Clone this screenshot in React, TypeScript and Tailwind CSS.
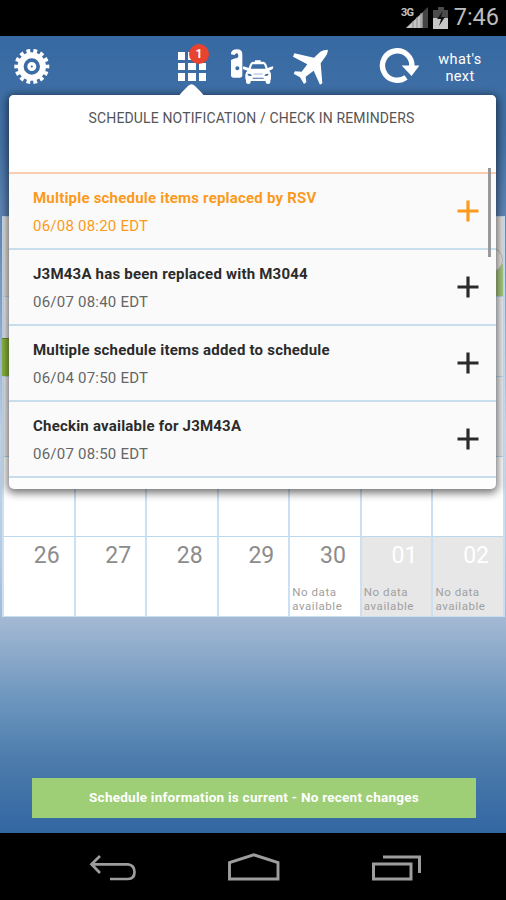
import { clsx } from 'clsx'

interface Reminder {
  title: string
  time: string
  unread?: boolean
}

interface CalendarCell {
  day?: string
  noData?: boolean
  outside?: boolean
}

const reminders: Reminder[] = [
  { title: 'Multiple schedule items replaced by RSV', time: '06/08 08:20 EDT', unread: true },
  { title: 'J3M43A has been replaced with M3044', time: '06/07 08:40 EDT' },
  { title: 'Multiple schedule items added to schedule', time: '06/04 07:50 EDT' },
  { title: 'Checkin available for J3M43A', time: '06/07 08:50 EDT' },
]

const lastWeek: CalendarCell[] = [
  { day: '26' },
  { day: '27' },
  { day: '28' },
  { day: '29' },
  { day: '30', noData: true },
  { day: '01', noData: true, outside: true },
  { day: '02', noData: true, outside: true },
]

const cells: CalendarCell[] = [...Array.from({ length: 28 }, () => ({})), ...lastWeek]

function StatusBar() {
  return (
    <div className="flex h-9 shrink-0 items-center justify-end bg-black pr-[7px]">
      <svg width="50" height="36" viewBox="0 0 50 36">
        <path d="M27 7v21h-22z" fill="#444" />
        <path d="M21.5 12.5V28H5z" fill="#c4c4c4" />
        <path d="M12 21v7M16 17v11M20 13v15" stroke="#8d8d8d" strokeWidth="1" />
        <path d="M37 7h6v3h4v8H32v-8h5z" fill="#4b4b4b" />
        <path d="M32 18h15v11H32z" fill="#c6c6c6" />
        <path d="M42 11l-6 8h4l-2 7 6-9h-4z" fill="#111" />
        <text x="0" y="15.5" fill="#c4c4c4" fontSize="11" fontWeight="700" fontFamily="Roboto" textLength="13">
          3G
        </text>
      </svg>
      <span className="ml-[3px] text-[23.5px] leading-none text-[#bdbdbd]">7:46</span>
    </div>
  )
}

function GearIcon() {
  return (
    <svg width="36" height="40" viewBox="0 0 36 40">
      <circle cx="17.8" cy="20.5" r="11.2" fill="none" stroke="#fff" strokeWidth="6" />
      <circle
        cx="17.8"
        cy="20.5"
        r="15.4"
        fill="none"
        stroke="#fff"
        strokeWidth="4.2"
        pathLength="140"
        strokeDasharray="5.4 4.6"
        strokeDashoffset="2.7"
      />
      <circle cx="17.8" cy="20.5" r="2.8" fill="none" stroke="#fff" strokeWidth="3.4" />
    </svg>
  )
}

function GridIcon() {
  return (
    <div className="relative ml-[126px] h-10 w-9">
      <div className="grid w-[30px] grid-cols-3 gap-x-[3px] gap-y-[3px] pt-1.5 pl-[1.5px]">
        {Array.from({ length: 9 }, (_, i) => (
          <div key={i} className="h-[7.5px] w-[7.5px] bg-white" />
        ))}
      </div>
      <span className="absolute -top-0.5 left-[13px] flex h-5 w-5 items-center justify-center rounded-full bg-[#e8432f] text-[12px] font-bold text-white">
        1
      </span>
    </div>
  )
}

function HotelTaxiIcon() {
  return (
    <svg className="ml-4" width="48" height="40" viewBox="0 0 144 120" fill="#fff">
      {/* door hanger */}
      <path
        fillRule="evenodd"
        d="M9 25V22Q11 10 27 10Q43 10 43 24V87Q43 95 35 95H17Q9 95 9 87V42L21 37Q31 37 31 29Q31 22 26 22Q21 22 20 27ZM28 61a6 6 0 1 0 .1 0Z"
      />
      {/* cab */}
      <path
        fillRule="evenodd"
        d="M81 47V43H98V47H106Q112 48 115 55L119 66L134 61Q138 65 133 70L124 74Q129 80 129 86V98Q129 101 127 102V109Q127 114 120 114Q113 114 113 109V105H68V109Q68 114 61 114Q54 114 54 109V102Q52 100 52 96V86Q53 79 58 74L46 70Q43 65 47 61L62 66L66 55Q69 48 74 47ZM73 55L68 68H113L108 55ZM58 83L61 89L72 90L68 84ZM122 83L119 89L109 90L113 84ZM77 83V85H104V83ZM74 95V98H107V95Z"
      />
    </svg>
  )
}

function PlaneIcon() {
  return (
    <svg className="ml-4" width="38" height="40" viewBox="396 30 114 120" fill="#fff">
      <path d="M503 41Q505 48 497 61L482 82L487 142L480 146L461 104L437 122L439 139L432 144L420 124L401 113L405 106L425 107L442 85L399 62L403 52L462 65L481 47Q490 41 503 41Z" />
    </svg>
  )
}

function RefreshIcon() {
  return (
    <svg className="ml-12" width="42" height="40" viewBox="0 0 42 40">
      <path d="M28 31.300A14.700 14.700 0 1 1 33.800 21" fill="none" stroke="#fff" strokeWidth="5.400" />
      <path d="M23.600 19.500H41.400L33.600 30Z" fill="#fff" />
    </svg>
  )
}

function Calendar() {
  return (
    <div className="mt-[122px] ml-0.5 grid h-[401px] w-[503px] grid-cols-7 grid-rows-5 overflow-hidden border-r-2 border-b border-[#c9def1]">
      {cells.map((cell, i) => (
        <div
          key={i}
          className={clsx(
            'relative border-t border-l-2 border-t-[#bcd8ee] border-l-[#cbe0f3]',
            i < 7 ? 'bg-[#e6e5e3]' : cell.outside ? 'bg-[#e7e7e7]' : i < 21 ? 'bg-[#eeeff3]' : 'bg-white',
          )}
        >
          {i === 6 && (
            <>
              <div className="absolute inset-x-0 bottom-0 h-8 bg-[#a9cc80]" />
              <div className="absolute top-[30px] right-0 h-[26px] w-[26px] rounded-full border border-[#bbb] bg-[#eeede9]" />
            </>
          )}
          {i === 7 && <div className="absolute bottom-0 -left-0.5 h-[38px] w-full border-t border-[#6a8a35] bg-[#8db83f]" />}
          {cell.day && (
            <div
              className={clsx(
                'mt-[5px] pr-[14px] text-right text-[23px] leading-[28px]',
                cell.outside ? 'text-white' : 'text-[#8c8c8c]',
              )}
            >
              {cell.day}
            </div>
          )}
          {cell.noData && (
            <p className="mt-[15px] pl-[2px] text-[11.5px] leading-[14px] tracking-[0.55px] text-[#a0a0a0]">
              No data
              <br />
              available
            </p>
          )}
        </div>
      ))}
    </div>
  )
}

function ReminderPopover() {
  return (
    <div className="absolute top-[59px] left-[9px] h-[394px] w-[487px] rounded-[5px] bg-[#fdfdfd] shadow-[0_2px_9px_2px_rgba(0,0,0,0.55)]">
      <svg className="absolute -top-[11px] left-[169px]" width="27" height="12" viewBox="0 0 27 12">
        <path d="M0 12Q2 11 4 8L10 2Q13.500 -1.500 17 2L23 8Q25 11 27 12Z" fill="#fff" />
      </svg>
      <div className="h-[77px] rounded-t-[5px] bg-white pt-3.5 pr-[2px] text-center text-[14px] leading-[18px] tracking-[0.14px] text-[#555]">
        SCHEDULE NOTIFICATION / CHECK IN REMINDERS
      </div>
      <div className="border-t-2 border-[#fbccae]">
        {reminders.map((item) => (
          <div
            key={item.title}
            className={clsx(
              'flex h-[76px] items-center justify-between border-b-2 border-[#c7ddec] bg-[#fafafa] pr-[17px] pl-6',
              item.unread ? 'text-[#fb9a1c]' : 'text-[#2b2b2b]',
            )}
          >
            <div className="pt-0.5">
              <div className="text-[15px] leading-[28px] font-bold tracking-[0.21px] whitespace-nowrap">{item.title}</div>
              <div className={clsx('text-[15px] leading-[28px] tracking-[0.23px]', !item.unread && 'text-[#666]')}>
                {item.time}
              </div>
            </div>
            <svg width="22" height="22" viewBox="0 0 22 22">
              <path d="M11 .5v21M.5 11h21" stroke="currentColor" strokeWidth="3.2" />
            </svg>
          </div>
        ))}
      </div>
      <div className="absolute top-[73px] right-[5px] h-[89px] w-[3px] bg-[#999]" />
    </div>
  )
}

function NavBar() {
  return (
    <div className="flex h-[67px] shrink-0 items-center bg-black pt-[5px] pl-[88px]">
      <svg width="50" height="34" viewBox="0 0 50 34" fill="none" stroke="#9d9d9d" strokeWidth="2.7">
        <path d="M12 4L3.500 12.300L12 21M3.500 12.300H40Q46.500 13 46.500 20Q46.500 27 40 27H22" />
      </svg>
      <svg className="ml-[88px]" width="56" height="34" viewBox="0 0 56 34" fill="none" stroke="#9d9d9d" strokeWidth="2.9">
        <path d="M3.500 27V10.500L27.700 2.800L52 10.500V27Z" />
      </svg>
      <svg className="ml-[88px]" width="54" height="34" viewBox="0 0 54 34" fill="none" stroke="#9d9d9d" strokeWidth="3">
        <path d="M3.500 12H41V27H3.500ZM13 5H49.500V21" />
      </svg>
    </div>
  )
}

export default function App() {
  return (
    <div className="flex h-[900px] w-[506px] flex-col overflow-hidden font-[Roboto,sans-serif]">
      <StatusBar />

      <div className="relative flex-1 bg-[linear-gradient(to_bottom,#3769a2_0%,#4573a8_14%,#6a8fbd_26%,#c5d8ee_50%,#b5c9e0_65%,#a4b9d4_73%,#6490ba_85%,#4c7bab_91%,#3367a2_100%)]">
        {/* Toolbar */}
        <div className="flex h-[58px] items-start pt-2.5 pl-3.5">
          <GearIcon />
          <GridIcon />
          <HotelTaxiIcon />
          <PlaneIcon />
          <RefreshIcon />
          <div className="ml-3.5 w-[52px] pt-1.5 text-center text-[14.5px] leading-[16.5px] tracking-[0.4px] text-white">
            what's
            <br />
            next
          </div>
        </div>

        <Calendar />

        <div className="mt-[161px] ml-8 flex h-10 w-[444px] items-center justify-center bg-[#9ecf76] pb-0.5 text-[13.5px] font-bold tracking-[0.25px] text-white">
          Schedule information is current - No recent changes
        </div>

        <ReminderPopover />
      </div>

      <NavBar />
    </div>
  )
}
